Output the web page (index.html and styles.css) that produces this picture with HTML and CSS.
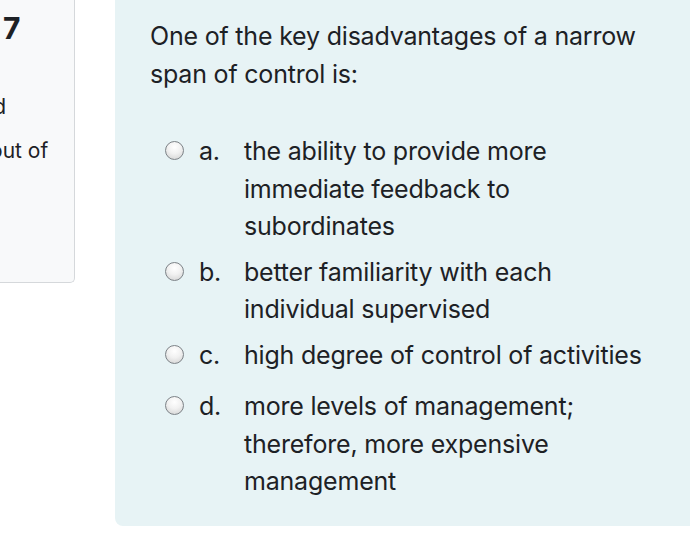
FILE: index.html
```html
<!DOCTYPE html>
<html>
<head>
<meta charset="utf-8">
<link rel="stylesheet" href="styles.css">
</head>
<body>
<div class="page">
  <div class="info">
    <h3 class="qno">Question <span class="num">7</span></h3>
    <div class="state">Not yet answered</div>
    <div class="grade">Marked out of 1.00</div>
  </div>
  <div class="content">
    <div class="qtext">One of the key disadvantages of a narrow span of control is:</div>
    <div class="answers">
      <div class="opt"><span class="radio"></span><span class="letter">a.</span><span class="label">the ability to provide more immediate feedback to subordinates</span></div>
      <div class="opt"><span class="radio"></span><span class="letter">b.</span><span class="label">better familiarity with each individual supervised</span></div>
      <div class="opt"><span class="radio"></span><span class="letter">c.</span><span class="label">high degree of control of activities</span></div>
      <div class="opt opt-last"><span class="radio"></span><span class="letter">d.</span><span class="label">more levels of management; therefore, more expensive management</span></div>
    </div>
  </div>
</div>
</body>
</html>
```

FILE: styles.css
```css
html, body {
  margin: 0;
  padding: 0;
  background: #ffffff;
  overflow: hidden;
}
body {
  font-family: Inter, "Noto Sans", sans-serif;
  color: #1d2125;
  width: 690px;
  height: 541px;
}
.page {
  display: flex;
  align-items: flex-start;
  gap: 40px;
}
.info {
  flex: 0 0 auto;
  width: 173px;
  margin-left: -98px;
  height: 283px;
  box-sizing: border-box;
  background: #f8f9fa;
  border: 1px solid #d5d8db;
  border-top: none;
  border-radius: 0 0 5px 0;
  padding: 8px 0 0 6px;
  font-size: 21px;
  line-height: 31px;
  overflow: hidden;
}
.qno {
  margin: 0 0 12px -46px;
  font-size: 30px;
  line-height: 40px;
  font-weight: 700;
  white-space: nowrap;
}
.state {
  width: 100px;
}
.grade {
  margin-top: 13px;
  width: 150px;
}
.content {
  flex: 0 0 auto;
  width: 640px;
  height: 526px;
  box-sizing: border-box;
  background: #e7f3f5;
  border-radius: 0 0 0 8px;
  padding: 18px 0 0 35px;
  font-size: 25px;
  line-height: 37.5px;
  letter-spacing: -0.2px;
}
.qtext {
  width: 500px;
}
.answers {
  margin-top: 40px;
  display: flex;
  flex-direction: column;
  gap: 8px;
}
.opt {
  display: flex;
  align-items: flex-start;
}
.opt-last {
  margin-top: 6px;
}
.radio {
  flex: 0 0 auto;
  width: 19px;
  height: 19px;
  margin: 8px 0 0 15px;
  box-sizing: border-box;
  border: 1px solid #7d8287;
  border-radius: 50%;
  background: radial-gradient(circle at 50% 30%, #ffffff 0%, #f1f1f1 45%, #cfcfcf 100%);
}
.letter {
  flex: 0 0 auto;
  width: 45px;
  margin-left: 15px;
}
.label {
  width: 410px;
}
```
